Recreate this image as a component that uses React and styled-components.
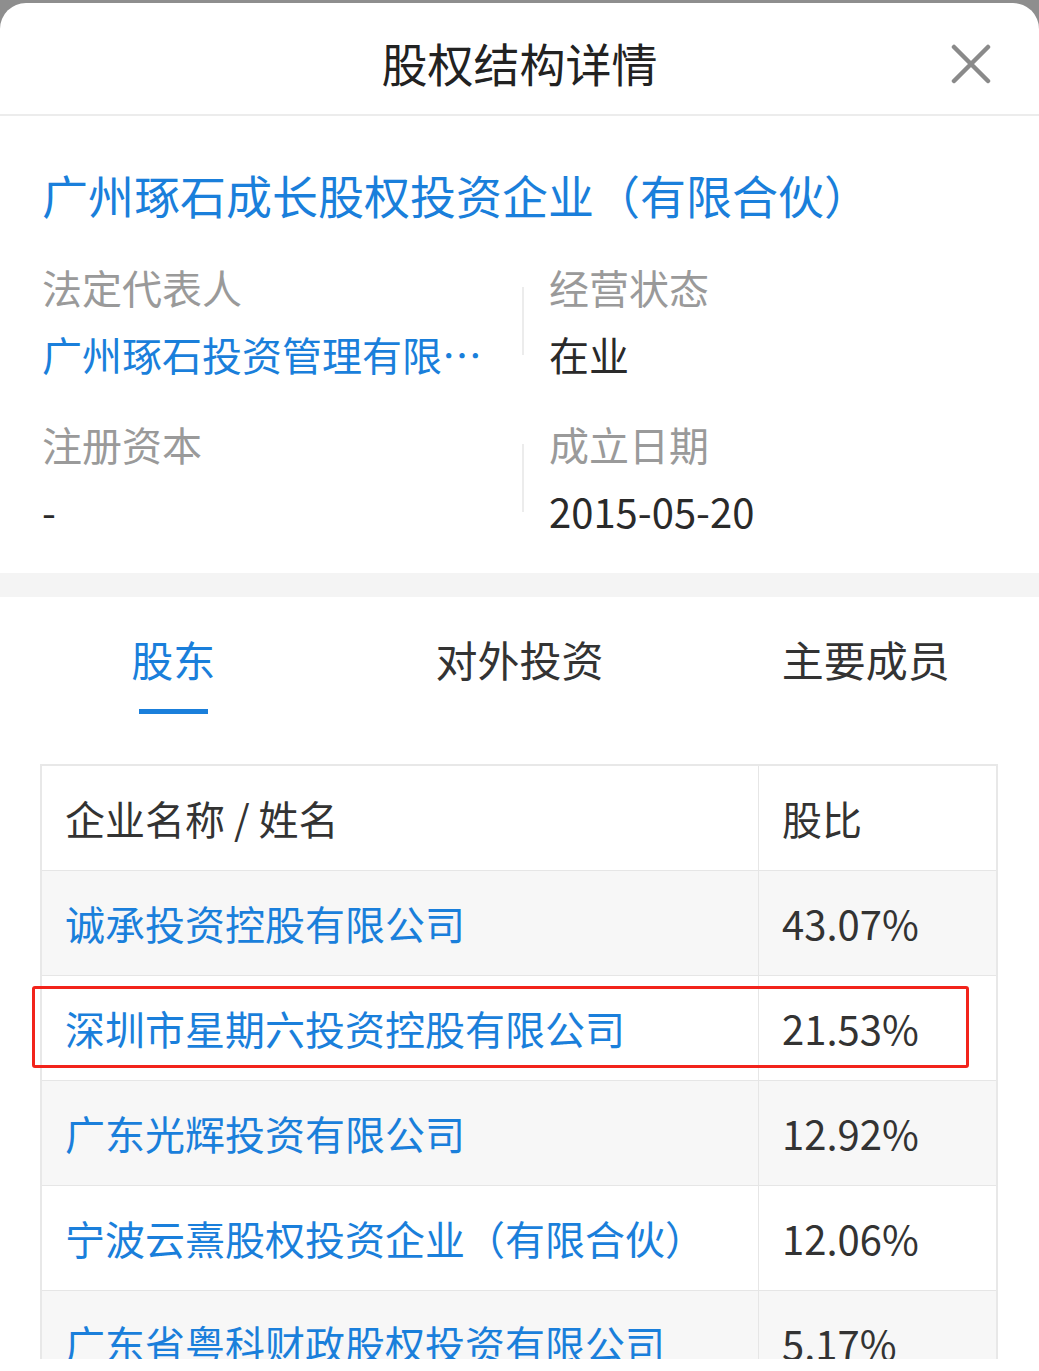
import React from "react";
import styled, { createGlobalStyle } from "styled-components";

const GlobalStyle = createGlobalStyle`
  html { background: #ffffff; }
  html, body { margin: 0; padding: 0; }
  body {
    background: #ffffff linear-gradient(#8e8e8e, #8e8e8e) no-repeat;
    background-size: 100% 40px;
    font-family: "Noto Sans CJK SC", "Noto Sans", sans-serif;
    color: #333;
  }
`;

const BLUE = "#1a7fdb";

const Screen = styled.div`
  width: 1039px;
  padding-top: 3px;
`;

const Sheet = styled.div`
  background: #fff;
  border-radius: 26px 26px 0 0;
  height: 1356px;
  overflow: hidden;
`;

const Header = styled.header`
  position: relative;
  height: 111px;
  display: flex;
  align-items: center;
  justify-content: center;
  border-bottom: 2px solid #ececec;
`;

const Title = styled.h1`
  margin: 0;
  margin-top: 6px;
  font-size: 46px;
  font-weight: 400;
  line-height: 60px;
  color: #222;
`;

const CloseButton = styled.button`
  position: absolute;
  right: 46px;
  top: 39px;
  width: 44px;
  height: 44px;
  padding: 0;
  border: 0;
  background: none;
  display: flex;
  align-items: center;
  justify-content: center;
`;

const Info = styled.section`
  padding: 50px 42px 38px;
`;

const CompanyName = styled.h2`
  margin: 0 0 41px;
  font-size: 46px;
  line-height: 56px;
  font-weight: 400;
  color: ${BLUE};
  white-space: nowrap;
`;

const InfoGrid = styled.div`
  display: grid;
  grid-template-columns: 480px 2px 1fr;
  row-gap: 42px;
  align-items: center;
`;

const InfoCell = styled.div`
  display: flex;
  flex-direction: column;
  gap: 19px;
  padding-left: ${(p) => (p.$right ? "25px" : "0")};
`;

const Divider = styled.div`
  width: 2px;
  height: 68px;
  background: #ececec;
`;

const Label = styled.div`
  font-size: 40px;
  line-height: 48px;
  color: #9a9a9a;
`;

const Value = styled.div`
  font-size: 40px;
  line-height: 48px;
  color: ${(p) => (p.$link ? BLUE : "#2a2a2a")};
  white-space: nowrap;
`;

const Band = styled.div`
  height: 24px;
  background: #f4f4f4;
`;

const Tabs = styled.nav`
  display: grid;
  grid-template-columns: repeat(3, 1fr);
  padding-top: 37px;
`;

const Tab = styled.div`
  display: flex;
  flex-direction: column;
  align-items: center;
  font-size: 42px;
  line-height: 50px;
  color: ${(p) => (p.$active ? BLUE : "#333")};

  &::after {
    content: "";
    display: block;
    width: 69px;
    height: 5px;
    margin-top: 25px;
    background: ${(p) => (p.$active ? BLUE : "transparent")};
  }
`;

const TableWrap = styled.div`
  position: relative;
  margin: 50px 41px 0 40px;
`;

const Table = styled.div`
  border: 2px solid #e8e8e8;
  border-bottom: 0;
`;

const Row = styled.div`
  display: grid;
  grid-template-columns: 716px 1fr;
  height: 104px;
  background: ${(p) => (p.$striped ? "#f7f7f7" : "#fff")};
  border-bottom: 1px solid #e6e6e6;
`;

const Cell = styled.div`
  display: flex;
  align-items: center;
  padding-left: 23px;
  font-size: 40px;
  line-height: 48px;
  color: ${(p) => (p.$link ? BLUE : "#333")};
  white-space: nowrap;
  & + & {
    border-left: 1px solid #e6e6e6;
  }
`;

const Highlight = styled.div`
  position: absolute;
  box-sizing: border-box;
  left: -8px;
  top: 222px;
  width: 937px;
  height: 82px;
  border: 3px solid #f2231b;
  border-radius: 3px;
  pointer-events: none;
`;

const rows = [
  ["诚承投资控股有限公司", "43.07%"],
  ["深圳市星期六投资控股有限公司", "21.53%"],
  ["广东光辉投资有限公司", "12.92%"],
  ["宁波云熹股权投资企业（有限合伙）", "12.06%"],
  ["广东省粤科财政股权投资有限公司", "5.17%"],
];

export default function App() {
  return (
    <Screen>
      <GlobalStyle />
      <Sheet>
        <Header>
          <Title>股权结构详情</Title>
          <CloseButton aria-label="关闭">
            <svg width="40" height="40" viewBox="0 0 40 40">
              <path
                d="M3 3 L37 37 M37 3 L3 37"
                stroke="#8a8a8a"
                strokeWidth="4.5"
                strokeLinecap="round"
                fill="none"
              />
            </svg>
          </CloseButton>
        </Header>
        <Info>
          <CompanyName>广州琢石成长股权投资企业（有限合伙）</CompanyName>
          <InfoGrid>
            <InfoCell>
              <Label>法定代表人</Label>
              <Value $link>广州琢石投资管理有限…</Value>
            </InfoCell>
            <Divider />
            <InfoCell $right>
              <Label>经营状态</Label>
              <Value>在业</Value>
            </InfoCell>
            <InfoCell>
              <Label>注册资本</Label>
              <Value>-</Value>
            </InfoCell>
            <Divider />
            <InfoCell $right>
              <Label>成立日期</Label>
              <Value>2015-05-20</Value>
            </InfoCell>
          </InfoGrid>
        </Info>
        <Band />
        <Tabs>
          <Tab $active>股东</Tab>
          <Tab>对外投资</Tab>
          <Tab>主要成员</Tab>
        </Tabs>
        <TableWrap>
          <Table>
            <Row>
              <Cell>企业名称 / 姓名</Cell>
              <Cell>股比</Cell>
            </Row>
            {rows.map(([name, pct], i) => (
              <Row key={name} $striped={i % 2 === 0}>
                <Cell $link>{name}</Cell>
                <Cell>{pct}</Cell>
              </Row>
            ))}
          </Table>
          <Highlight />
        </TableWrap>
      </Sheet>
    </Screen>
  );
}
